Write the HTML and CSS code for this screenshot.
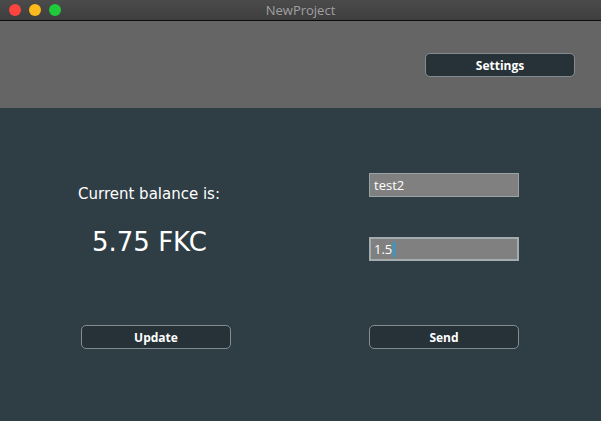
FILE: index.html
```html
<!DOCTYPE html>
<html>
<head>
<meta charset="utf-8">
<link rel="stylesheet" href="styles.css">
</head>
<body>
<div class="window">
  <div class="titlebar">
    <div class="lights">
      <span class="light red"></span>
      <span class="light yellow"></span>
      <span class="light green"></span>
    </div>
    <div class="title">NewProject</div>
  </div>
  <div class="header">
    <button class="btn settings">Settings</button>
  </div>
  <div class="main">
    <div class="col left">
      <div class="label">Current balance is:</div>
      <div class="balance">5.75 FKC</div>
      <button class="btn update">Update</button>
    </div>
    <div class="col right">
      <div class="input first">test2</div>
      <div class="input focused">1.5<span class="caret"></span></div>
      <button class="btn send">Send</button>
    </div>
  </div>
</div>
</body>
</html>
```
FILE: styles.css
```css
html, body {
  margin: 0;
  padding: 0;
  background: #2f3d45;
}
.window {
  width: 601px;
  height: 421px;
  display: flex;
  flex-direction: column;
  background: #2f3d45;
  border-radius: 0 0 5px 5px;
  overflow: hidden;
  font-family: "DejaVu Sans", sans-serif;
  color: #ffffff;
}
.titlebar {
  height: 20px;
  border-bottom: 1px solid #0c0c0c;
  background: linear-gradient(#4b4b4b, #3e3e3e);
  display: flex;
  align-items: center;
  justify-content: center;
  position: relative;
}
.lights {
  position: absolute;
  left: 9px;
  top: 4px;
  display: flex;
  gap: 8px;
}
.light {
  width: 12px;
  height: 12px;
  border-radius: 50%;
  display: block;
}
.red { background: #fd443f; }
.yellow { background: #fcba1c; }
.green { background: #1fcb3a; }
.title {
  font-family: "Open Sans", sans-serif;
  font-size: 13px;
  color: #a0a0a0;
}
.header {
  height: 87px;
  background: #656565;
  display: flex;
  justify-content: flex-end;
  align-items: flex-start;
  padding-right: 26px;
}
.btn {
  width: 150px;
  height: 24px;
  background: #263238;
  border: 1px solid #838d91;
  border-radius: 5px;
  color: #ffffff;
  font-family: "Open Sans", sans-serif;
  font-weight: 700;
  font-size: 12px;
  padding: 0;
  display: flex;
  align-items: center;
  justify-content: center;
}
.settings {
  margin-top: 32px;
}
.main {
  flex: 1;
  display: flex;
  padding-left: 81px;
  gap: 138px;
}
.col {
  width: 150px;
  display: flex;
  flex-direction: column;
}
.label {
  margin-top: 76px;
  margin-left: -3px;
  font-size: 15px;
  line-height: 20px;
  white-space: nowrap;
}
.balance {
  margin-top: 23px;
  margin-left: 11px;
  font-size: 26px;
  line-height: 30px;
  white-space: nowrap;
}
.update {
  margin-top: 68px;
}
.input {
  box-sizing: border-box;
  width: 150px;
  height: 24px;
  background: #808080;
  border: 1px solid #9aa4a7;
  font-family: "Open Sans", sans-serif;
  font-size: 13px;
  padding-left: 4px;
  display: flex;
  align-items: center;
  color: #ffffff;
}
.first {
  margin-top: 65px;
}
.focused {
  margin-top: 40px;
  border: 2px solid #a3acae;
  padding-left: 3px;
}
.caret {
  display: inline-block;
  width: 2px;
  height: 15px;
  background: #1aa0e0;
  margin-left: 1px;
}
.send {
  margin-top: 64px;
}
```
